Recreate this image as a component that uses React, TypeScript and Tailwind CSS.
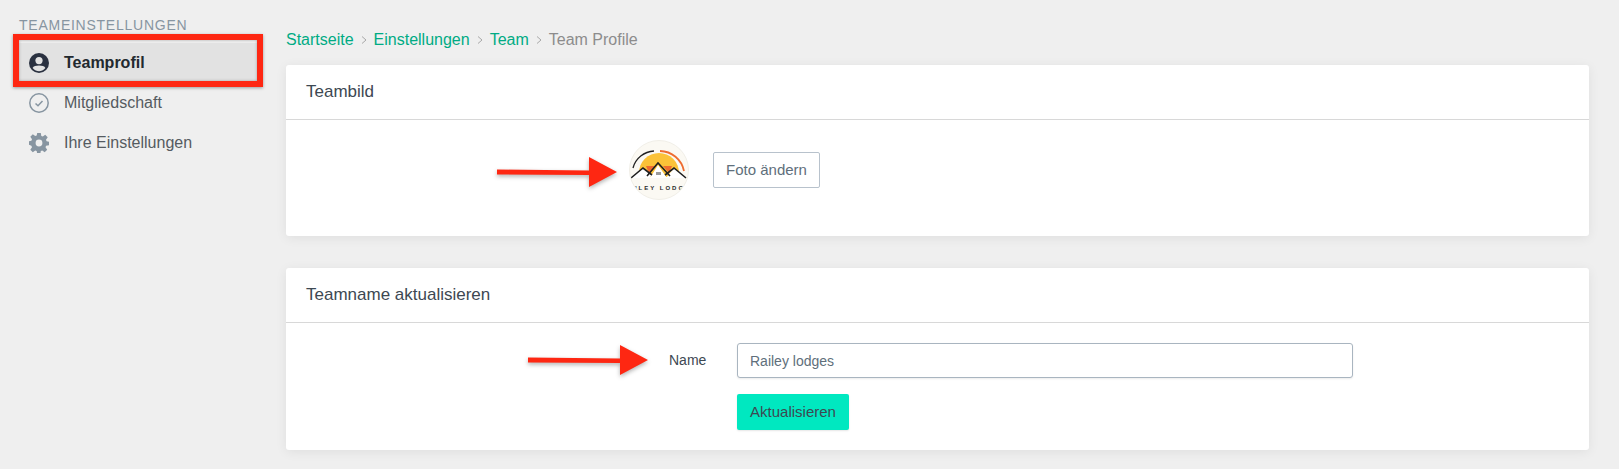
import React from 'react';

const Arrow = ({ className }: { className: string }) => (
  <svg className={`absolute drop-shadow-[0_2px_2px_rgba(0,0,0,0.3)] ${className}`} width="124" height="32" viewBox="0 0 124 32">
    <path d="M2 13.5 L94 14.5 L94 1 L122 16 L94 31 L94 19 L2 18.5 Z" fill="#fe2712" />
  </svg>
);

const TeamLogo = () => (
  <div className="w-[60px] h-[60px] rounded-full bg-[#fbf9f3] border border-[#f1efe8] overflow-hidden shrink-0">
    <svg width="58" height="58" viewBox="0 0 58 58">
      <path d="M9 32 A20 20 0 0 1 49 32 L49 36 L9 36 Z" fill="#fbc238" />
      <path d="M3 27 A23 23 0 0 1 24 10" fill="none" stroke="#222" strokeWidth="1.3" />
      <path d="M30 10 A25 25 0 0 1 54 30" fill="none" stroke="#ee6b2f" strokeWidth="1.8" />
      <path d="M16 25 L25 25 L19 32 Z M33 25 L42 25 L39 32 Z" fill="#ee6b2f" />
      <path d="M1 37 L13 27 L22 34 L19 37 Z M20 37 L28 24 L37 37 Z M36 37 L44 27 L56 37 Z" fill="#fff" />
      <path d="M1 37 L13 27 L22 34 M17 35 L28 22 L40 35 M35 34 L44 27 L56 37" fill="none" stroke="#1f1f1f" strokeWidth="1.6" />
      <rect x="26" y="31" width="5" height="3" fill="#9a9a9a" />
      <text x="30" y="48.5" textAnchor="middle" fontSize="6" fontWeight="700" letterSpacing="2" fill="#2b2b2b" fontFamily="'Liberation Sans', sans-serif">ILEY LODG</text>
    </svg>
  </div>
);

const Chevron = () => (
  <svg className="mx-[7px]" width="6" height="8" viewBox="0 0 6 8" fill="none" stroke="#a8a8a8" strokeWidth="1">
    <path d="M1 0.5 L5 4 L1 7.5" />
  </svg>
);

const Card = ({ title, children, className }: { title: string; children: React.ReactNode; className: string }) => (
  <div className={`bg-white rounded-[3px] shadow-[0_2px_12px_rgba(0,0,0,0.07)] ${className}`}>
    <div className="h-[55px] pl-[20px] flex items-center border-b border-[#d8d8d8] text-[17px] text-[#3d4852]">{title}</div>
    {children}
  </div>
);

export default function App() {
  return (
    <div className="relative w-[1619px] h-[469px] overflow-hidden bg-[#efefef] flex font-['Liberation_Sans',sans-serif]">
      {/* Sidebar */}
      <div className="w-[286px] shrink-0 pt-[17px]">
        <div className="pl-[19px] text-[14px] leading-[16px] tracking-[0.75px] text-[#8795a1]">TEAMEINSTELLUNGEN</div>
        <div className="mt-[10px] flex flex-col">
          <div className="ml-[18px] w-[240px] h-[40px] bg-[#e2e2e2] flex items-center pl-[11px] gap-[15px] text-[16px] font-bold text-[#22292f]">
            <svg width="20" height="20" viewBox="0 0 20 20">
              <circle cx="10" cy="10" r="10" fill="#2a3140" />
              <circle cx="10" cy="7.6" r="3.6" fill="#e2e2e2" />
              <path d="M3.6 15 C5 11.8 15 11.8 16.4 15 C14.5 17.5 12 18.2 10 18.2 C8 18.2 5.5 17.5 3.6 15 Z" fill="#e2e2e2" />
            </svg>
            Teamprofil
          </div>
          <div className="ml-[18px] h-[40px] flex items-center pl-[11px] gap-[15px] text-[16px] text-[#555b61]">
            <svg width="20" height="20" viewBox="0 0 20 20" fill="none" stroke="#8795a1">
              <circle cx="10" cy="10" r="9.2" strokeWidth="1.5" />
              <path d="M6.5 10.5 L9 12.8 L13.5 8" strokeWidth="1.5" />
            </svg>
            Mitgliedschaft
          </div>
          <div className="ml-[18px] h-[40px] flex items-center pl-[11px] gap-[15px] text-[16px] text-[#555b61]">
            <svg width="20" height="20" viewBox="0 0 20 20">
              <path
                fill="#8795a1"
                fillRule="evenodd"
                d="M8.2 0h3.6l.5 2.9 1.5.6 2.4-1.7 2.5 2.5-1.7 2.4.6 1.5 2.4.5v3.6l-2.9.5-.6 1.5 1.7 2.4-2.5 2.5-2.4-1.7-1.5.6-.5 2.9H8.2l-.5-2.9-1.5-.6-2.4 1.7-2.5-2.5 1.7-2.4-.6-1.5L0 11.8V8.2l2.4-.5.6-1.5-1.7-2.4 2.5-2.5 2.4 1.7 1.5-.6zM10 6.6a3.4 3.4 0 1 0 0 6.8 3.4 3.4 0 0 0 0-6.8z"
              />
            </svg>
            Ihre Einstellungen
          </div>
        </div>
      </div>

      {/* Main */}
      <div className="w-[1303px] shrink-0">
        <div className="h-[65px] pb-[15px] flex items-end text-[16px] leading-[20px] text-[#00ab84]">
          <span>Startseite</span>
          <span className="h-[20px] flex items-center"><Chevron /></span>
          <span>Einstellungen</span>
          <span className="h-[20px] flex items-center"><Chevron /></span>
          <span>Team</span>
          <span className="h-[20px] flex items-center"><Chevron /></span>
          <span className="text-[#8c8c8c]">Team Profile</span>
        </div>

        <Card title="Teambild" className="h-[171px]">
          <div className="pl-[343px] pt-[20px] flex items-start gap-[24px]">
            <TeamLogo />
            <button className="mt-[12px] w-[107px] h-[36px] bg-white border border-[#b8c2cc] rounded-[2px] text-[15px] text-[#606f7b]">Foto ändern</button>
          </div>
        </Card>

        <Card title="Teamname aktualisieren" className="h-[182px] mt-[32px]">
          <div className="pl-[383px] pt-[20px] flex items-start">
            <div className="w-[68px] h-[35px] flex items-center text-[14px] text-[#3d4852]">Name</div>
            <div className="flex flex-col gap-[16px]">
              <input
                readOnly
                value="Railey lodges"
                className="w-[616px] h-[35px] px-[12px] bg-white border border-[#a9b5c0] rounded-[3px] text-[14px] text-[#606f7b] shadow-[0_1px_2px_rgba(0,0,0,0.08)] outline-none"
              />
              <button className="w-[112px] h-[36px] bg-[#00e8c0] rounded-[2px] text-[15px] text-[#3d4852] shadow-[0_1px_2px_rgba(0,0,0,0.1)]">Aktualisieren</button>
            </div>
          </div>
        </Card>
      </div>

      {/* Annotations */}
      <div className="absolute left-[13px] top-[34px] w-[250px] h-[53px] border-[6px] border-[#fe2712] shadow-[0_1px_3px_rgba(0,0,0,0.35),inset_0_0_3px_rgba(0,0,0,0.3)]" />
      <Arrow className="left-[495px] top-[156px]" />
      <Arrow className="left-[526px] top-[344px]" />
    </div>
  );
}
